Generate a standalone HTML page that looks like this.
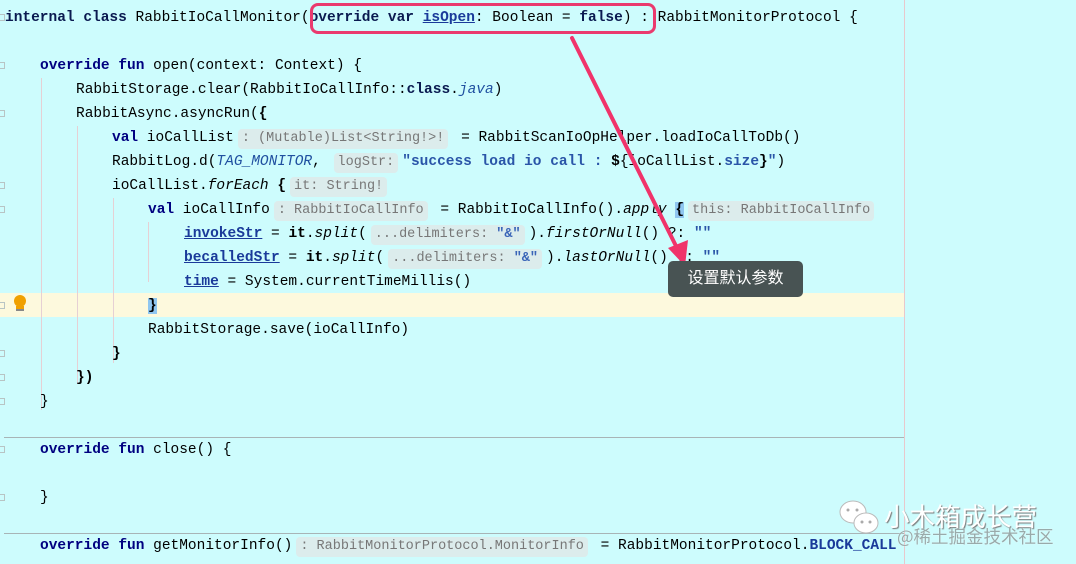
<!DOCTYPE html>
<html><head><meta charset="utf-8">
<style>
*{margin:0;padding:0;box-sizing:border-box}
body{width:1076px;height:564px;background:#cdfcfd;position:relative;overflow:hidden;font-family:"Liberation Mono",monospace;font-size:14.5px;color:#000}
.l{position:absolute;height:24px;line-height:24px;white-space:pre}
.k{font-weight:bold;color:#000080}
.kb{font-weight:bold;color:#0a1a50}
.u{font-weight:bold;color:#1a3a9a;text-decoration:underline}
.s{color:#2a55a8;font-weight:bold}
.it{font-style:italic}
.itb{font-style:italic;color:#2050a0}
.h{display:inline-block;background:#dcecec;color:#777;border-radius:4px;padding:0 4px;line-height:20px;font-size:13.5px;margin:0 4px}
.hs{color:#3a65b8;font-weight:bold}
.g{position:absolute;width:1px;background:#e6d0d4}
.sep{position:absolute;left:4px;width:900px;height:1px;background:#a8b4b6}
.f{position:absolute;left:0;width:5px;height:7px;border:1px solid #b8c4c4;border-left:none}
</style></head><body>
<div style="position:absolute;left:0;top:293px;width:904px;height:24px;background:#fdf9dd"></div>
<div style="position:absolute;left:904px;top:0;width:1px;height:564px;background:#e8c8cc"></div>
<div class="sep" style="top:437px"></div>
<div class="sep" style="top:533px"></div>
<div class="g" style="left:41px;top:78px;height:332px"></div>
<div class="g" style="left:77px;top:126px;height:258px"></div>
<div class="g" style="left:113px;top:198px;height:165px"></div>
<div class="g" style="left:148px;top:222px;height:60px"></div>
<div class="f" style="top:14px"></div><div class="f" style="top:62px"></div><div class="f" style="top:110px"></div><div class="f" style="top:182px"></div><div class="f" style="top:206px"></div><div class="f" style="top:302px"></div><div class="f" style="top:350px"></div><div class="f" style="top:374px"></div><div class="f" style="top:398px"></div><div class="f" style="top:446px"></div><div class="f" style="top:494px"></div>
<div style="position:absolute;left:14px;top:295px;width:12px;height:12px;border-radius:50%;background:#f0a000"></div>
<div style="position:absolute;left:16px;top:306px;width:8px;height:5px;background:#f0a000;border-bottom:2px solid #888"></div>

<div class="l" style="left:5px;top:6px"><span class="kb">internal class</span> RabbitIoCallMonitor(<span class="kb">override var</span> <span class="u">isOpen</span>: Boolean = <span class="kb">false</span>) : RabbitMonitorProtocol {</div>
<div class="l" style="left:40px;top:54px"><span class="k">override fun</span> open(context: Context) {</div>
<div class="l" style="left:76px;top:78px">RabbitStorage.clear(RabbitIoCallInfo::<span class="kb">class</span>.<span class="itb">java</span>)</div>
<div class="l" style="left:76px;top:102px">RabbitAsync.asyncRun(<b>{</b></div>
<div class="l" style="left:112px;top:126px"><span class="k">val</span> ioCallList<span class="h">: (Mutable)List&lt;String!&gt;!</span> = RabbitScanIoOpHelper.loadIoCallToDb()</div>
<div class="l" style="left:112px;top:150px">RabbitLog.d(<span class="itb">TAG_MONITOR</span>, <span class="h">logStr:</span><span class="s">"success load io call : </span><b>$</b>{ioCallList.<span class="s">size</span><b>}</b><span class="s">"</span>)</div>
<div class="l" style="left:112px;top:174px">ioCallList.<span class="it">forEach</span> <b>{</b><span class="h">it: String!</span></div>
<div class="l" style="left:148px;top:198px"><span class="k">val</span> ioCallInfo<span class="h">: RabbitIoCallInfo</span> = RabbitIoCallInfo().<span class="it">apply</span> <b style="background:#8fc6f0">{</b><span class="h">this: RabbitIoCallInfo</span></div>
<div class="l" style="left:184px;top:222px"><span class="u">invokeStr</span> = <b>it</b>.<span class="it">split</span>(<span class="h">...delimiters: <span class="hs">"&amp;"</span></span>).<span class="it">firstOrNull</span>() ?: <span class="s">""</span></div>
<div class="l" style="left:184px;top:246px"><span class="u">becalledStr</span> = <b>it</b>.<span class="it">split</span>(<span class="h">...delimiters: <span class="hs">"&amp;"</span></span>).<span class="it">lastOrNull</span>() ?: <span class="s">""</span></div>
<div class="l" style="left:184px;top:270px"><span class="u">time</span> = System.currentTimeMillis()</div>
<div class="l" style="left:148px;top:294px"><b style="background:#8fc6f0">}</b></div>
<div class="l" style="left:148px;top:318px">RabbitStorage.save(ioCallInfo)</div>
<div class="l" style="left:112px;top:342px"><b>}</b></div>
<div class="l" style="left:76px;top:366px"><b>})</b></div>
<div class="l" style="left:40px;top:390px">}</div>
<div class="l" style="left:40px;top:438px"><span class="k">override fun</span> close() {</div>
<div class="l" style="left:40px;top:486px">}</div>
<div class="l" style="left:40px;top:534px"><span class="k">override fun</span> getMonitorInfo()<span class="h">: RabbitMonitorProtocol.MonitorInfo</span> = RabbitMonitorProtocol.<span class="s" style="color:#1a3a9a">BLOCK_CALL</span></div>

<div style="position:absolute;left:310px;top:3px;width:346px;height:31px;border:3px solid #ea3a6e;border-radius:8px"></div>
<svg style="position:absolute;left:0;top:0" width="1076" height="564">
<line x1="572" y1="38" x2="678" y2="250" stroke="#f0336a" stroke-width="4" stroke-linecap="round"/>
<polygon points="685,266 668,248 688,240" fill="#f0336a"/>
</svg>
<div style="position:absolute;left:668px;top:261px;width:135px;height:36px;background:#485353;border-radius:5px;color:#fff;font-family:'Liberation Sans','Noto Sans CJK SC',sans-serif;font-size:16px;line-height:36px;text-align:center">设置默认参数</div>

<svg style="position:absolute;left:838px;top:498px" width="46" height="40">
<ellipse cx="15" cy="14" rx="13" ry="11" fill="#fff" stroke="#bbb"/>
<ellipse cx="28" cy="25" rx="12" ry="10" fill="#fff" stroke="#bbb"/>
<circle cx="24" cy="24" r="1.5" fill="#aaa"/><circle cx="32" cy="24" r="1.5" fill="#aaa"/>
<circle cx="10" cy="12" r="1.5" fill="#aaa"/><circle cx="19" cy="12" r="1.5" fill="#aaa"/>
</svg>
<div style="position:absolute;left:884px;top:500px;font-family:'Noto Sans CJK SC',sans-serif;font-size:25.5px;line-height:32px;color:#fff;text-shadow:1px 1px 1px #777">小木箱成长营</div>
<div style="position:absolute;left:897px;top:525px;font-family:'Noto Sans CJK SC',sans-serif;font-size:17.5px;line-height:24px;color:#9aa;text-shadow:0 0 1px #fff">@稀土掘金技术社区</div>
</body></html>
